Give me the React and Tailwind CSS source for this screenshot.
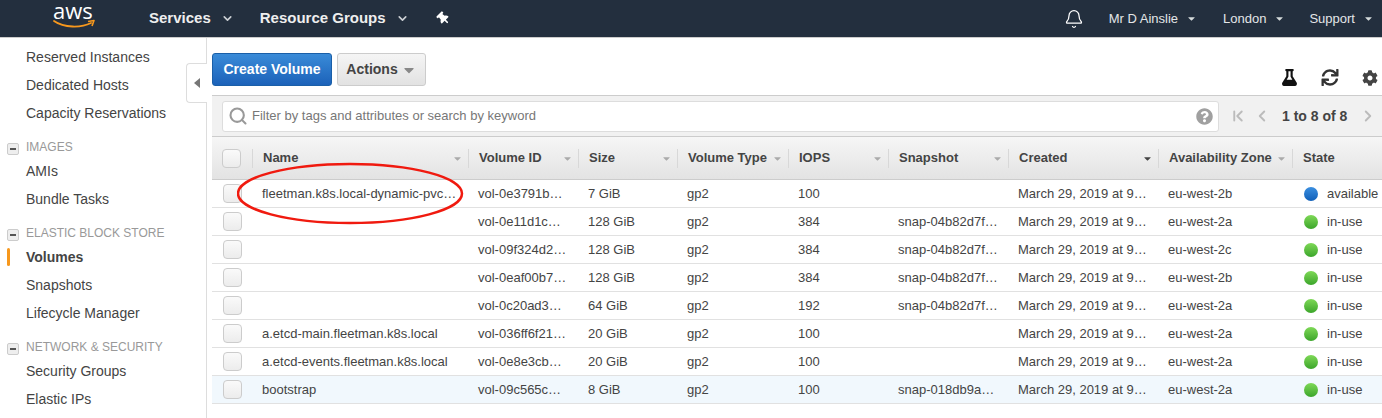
import { Bell, ChevronDown, ChevronFirst, ChevronLeft, ChevronRight, Search } from "lucide-react";
import { FaCaretDown, FaCog, FaFlask, FaQuestionCircle, FaSync, FaThumbtack } from "react-icons/fa";

const columns = [
  { label: "Name", caret: true },
  { label: "Volume ID", caret: true },
  { label: "Size", caret: true },
  { label: "Volume Type", caret: true },
  { label: "IOPS", caret: true },
  { label: "Snapshot", caret: true },
  { label: "Created", caret: true, active: true },
  { label: "Availability Zone", caret: true },
  { label: "State" },
];

const rows = [
  ["fleetman.k8s.local-dynamic-pvc…", "vol-0e3791b…", "7 GiB", "gp2", "100", "", "March 29, 2019 at 9…", "eu-west-2b", "available"],
  ["", "vol-0e11d1c…", "128 GiB", "gp2", "384", "snap-04b82d7f…", "March 29, 2019 at 9…", "eu-west-2a", "in-use"],
  ["", "vol-09f324d2…", "128 GiB", "gp2", "384", "snap-04b82d7f…", "March 29, 2019 at 9…", "eu-west-2c", "in-use"],
  ["", "vol-0eaf00b7…", "128 GiB", "gp2", "384", "snap-04b82d7f…", "March 29, 2019 at 9…", "eu-west-2b", "in-use"],
  ["", "vol-0c20ad3…", "64 GiB", "gp2", "192", "snap-04b82d7f…", "March 29, 2019 at 9…", "eu-west-2a", "in-use"],
  ["a.etcd-main.fleetman.k8s.local", "vol-036ff6f21…", "20 GiB", "gp2", "100", "", "March 29, 2019 at 9…", "eu-west-2a", "in-use"],
  ["a.etcd-events.fleetman.k8s.local", "vol-0e8e3cb…", "20 GiB", "gp2", "100", "", "March 29, 2019 at 9…", "eu-west-2a", "in-use"],
  ["bootstrap", "vol-09c565c…", "8 GiB", "gp2", "100", "snap-018db9a…", "March 29, 2019 at 9…", "eu-west-2a", "in-use"],
];

const gridCols = "grid grid-cols-[40px_216px_110px_99px_111px_100px_120px_150px_134px_90px]";

function SideItem({ children, active }) {
  return (
    <div className={`relative flex h-[28px] items-center pl-[26px] text-[14px] ${active ? "font-bold text-[#444]" : "text-[#444]"}`}>
      {active && <span className="absolute left-[7px] top-[5px] h-[18px] w-[3px] rounded-sm bg-[#f7981d]" />}
      {children}
    </div>
  );
}

function SideSection({ children }) {
  return (
    <div className="mt-2 flex h-[22px] items-center text-[12px] text-[#999]">
      <span className="ml-[7px] mr-[7px] mt-[5px] flex h-[12px] w-[12px] items-center justify-center rounded-[2px] border border-[#ccc] bg-[#eee]">
        <span className="h-[2px] w-[6px] bg-[#555]" />
      </span>
      <span className="pt-[2px]">{children}</span>
    </div>
  );
}

function Checkbox() {
  return <span className="block h-[19px] w-[19px] rounded-[4px] border border-[#ccc] bg-gradient-to-b from-[#fafafa] to-[#ececec]" />;
}

function TopLink({ children, className }) {
  return (
    <span className={`flex items-center text-[13px] text-[#e4e6e8] ${className}`}>
      {children}
      <FaCaretDown className="ml-[8px] h-[11px] w-[11px] text-[#d5dbdb]" />
    </span>
  );
}

export default function App() {
  return (
    <div className="relative flex h-[418px] w-[1382px] flex-col overflow-hidden bg-white font-['Liberation_Sans',Arial,sans-serif]">
      <header className="flex h-[38px] shrink-0 items-center border-b border-[#ccc] bg-[#232f3e]">
        <div className="relative ml-[53px] h-[37px] w-[42px]">
          <span className="absolute left-0 top-0 font-['Open_Sans',sans-serif] text-[22px] leading-[20px] text-white">aws</span>
          <svg viewBox="0 0 42 10" className="absolute left-0 top-[19px] h-[10px] w-[42px]">
            <path d="M1 2 C11 9 28 9 38 4" fill="none" stroke="#f7981d" strokeWidth="1.8" strokeLinecap="round" />
            <path d="M35 2.5 L41 1.5 L39 7" fill="none" stroke="#f7981d" strokeWidth="1.6" strokeLinejoin="round" />
          </svg>
        </div>
        <span className="ml-[54px] text-[15px] font-bold text-[#eee]">Services</span>
        <ChevronDown className="ml-[10px] h-[13px] w-[13px] text-[#ccd0d4]" strokeWidth={3} />
        <span className="ml-[26px] text-[15px] font-bold text-[#eee]">Resource Groups</span>
        <ChevronDown className="ml-[10px] h-[13px] w-[13px] text-[#ccd0d4]" strokeWidth={3} />
        <FaThumbtack className="ml-[28px] h-[13px] w-[13px] -rotate-45 text-white" />
        <div className="ml-auto flex items-center">
          <Bell className="mr-[25px] h-[20px] w-[20px] text-white" strokeWidth={1.5} />
          <TopLink className="mr-[26px]">Mr D Ainslie</TopLink>
          <TopLink className="mr-[24px]">London</TopLink>
          <TopLink className="mr-[8px]">Support</TopLink>
        </div>
      </header>

      <div className="flex min-h-0 flex-1">
        <aside className="relative w-[207px] shrink-0 border-r border-[#ddd] pt-[14px]">
          <div className="h-full overflow-hidden">
            <div className="-mt-[9px]">
              <SideItem>Reserved Instances</SideItem>
              <SideItem>Dedicated Hosts</SideItem>
              <SideItem>Capacity Reservations</SideItem>
              <SideSection>IMAGES</SideSection>
              <SideItem>AMIs</SideItem>
              <SideItem>Bundle Tasks</SideItem>
              <SideSection>ELASTIC BLOCK STORE</SideSection>
              <SideItem active>Volumes</SideItem>
              <SideItem>Snapshots</SideItem>
              <SideItem>Lifecycle Manager</SideItem>
              <SideSection>NETWORK &amp; SECURITY</SideSection>
              <SideItem>Security Groups</SideItem>
              <SideItem>Elastic IPs</SideItem>
            </div>
          </div>
          {/* collapse tab sits over the sidebar edge */}
          <div className="absolute -right-px top-[25px] flex h-[40px] w-[21px] items-center justify-center rounded-l-[4px] border border-r-0 border-[#ddd] bg-white">
            <span className="h-0 w-0 border-y-[5px] border-r-[6px] border-y-transparent border-r-[#777]" />
          </div>
        </aside>

        <main className="relative min-w-0 flex-1 pl-[5px]">
          <div className="flex h-[57px] items-start pt-[15px]">
            <button className="h-[33px] w-[120px] rounded-[3px] border border-[#1a5fa8] bg-gradient-to-b from-[#3a8bd8] to-[#1c62b9] text-[14px] font-bold text-white">
              Create Volume
            </button>
            <button className="ml-[5px] flex h-[33px] w-[89px] items-center justify-center rounded-[3px] border border-[#ccc] bg-gradient-to-b from-[#f5f5f5] to-[#e2e2e2] text-[14px] font-bold text-[#444]">
              Actions
              <FaCaretDown className="ml-[3px] h-[16px] w-[16px] text-[#888]" />
            </button>
            <div className="ml-auto flex items-center pt-[16px]">
              <FaFlask className="mr-[22px] h-[17px] w-[17px] text-[#111]" />
              <FaSync className="mr-[22px] h-[17px] w-[20px] text-[#333]" />
              <FaCog className="mr-[4px] h-[16px] w-[16px] text-[#444]" />
            </div>
          </div>

          <div className="flex h-[42px] items-center border-y border-[#ccc] bg-[#f1f1f1] pl-[10px]">
            <div className="flex h-[31px] w-[997px] items-center rounded-[3px] border border-[#ddd] bg-white pl-[5px] pr-[4px]">
              <Search className="h-[20px] w-[20px] text-[#999]" strokeWidth={2.5} />
              <span className="ml-[4px] text-[13px] text-[#777]">Filter by tags and attributes or search by keyword</span>
              <FaQuestionCircle className="ml-auto mr-[1px] h-[17px] w-[17px] text-[#a0a0a0]" />
            </div>
            <ChevronFirst className="ml-[10px] h-[18px] w-[18px] text-[#bbb]" strokeWidth={2.5} />
            <ChevronLeft className="ml-[6px] h-[18px] w-[18px] text-[#bbb]" strokeWidth={2.5} />
            <span className="ml-[11px] text-[14px] font-bold text-[#444]">1 to 8 of 8</span>
            <ChevronRight className="ml-[12px] h-[18px] w-[18px] text-[#bbb]" strokeWidth={2.5} />
          </div>

          <div className={`${gridCols} h-[43px] items-center border-b border-[#ccc] bg-gradient-to-b from-[#f6f6f6] to-[#e3e3e3]`}>
            <div className="pl-[10px]">
              <Checkbox />
            </div>
            {columns.map((col) => (
              <div key={col.label} className="relative flex h-[19px] items-center border-l border-[#d8d8d8] pl-[10px] text-[13px] font-bold text-[#444]">
                {col.label}
                {col.caret && (
                  <FaCaretDown className={`absolute right-[5px] top-[4px] h-[11px] w-[11px] ${col.active ? "text-[#444]" : "text-[#aaa]"}`} />
                )}
              </div>
            ))}
          </div>

          {rows.map((row, i) => (
            <div key={i} className={`${gridCols} h-[28px] items-center border-b border-[#e1e1e1] text-[13px] text-[#444] ${i === 7 ? "bg-[#f1f8fd]" : ""}`}>
              <div className="pl-[11px]">
                <Checkbox />
              </div>
              {row.map((cell, c) => (
                <div key={c} className="flex items-center whitespace-nowrap pl-[10px]">
                  {c === 8 && (
                    <span className={`ml-[2px] mr-[9px] h-[14px] w-[14px] rounded-full ${cell === "available" ? "bg-gradient-to-b from-[#3a8fe0] to-[#0f5fb8]" : "bg-gradient-to-b from-[#7ed957] to-[#3aa52a]"}`} />
                  )}
                  {cell}
                </div>
              ))}
            </div>
          ))}

          {/* hand drawn marker over the first row */}
          <svg className="pointer-events-none absolute left-[30px] top-[124px] h-[64px] w-[230px]" viewBox="0 0 230 64">
            <ellipse cx="113" cy="31.5" rx="112" ry="29.5" fill="none" stroke="#f01a0f" strokeWidth="2.5" />
          </svg>
        </main>
      </div>
    </div>
  );
}
